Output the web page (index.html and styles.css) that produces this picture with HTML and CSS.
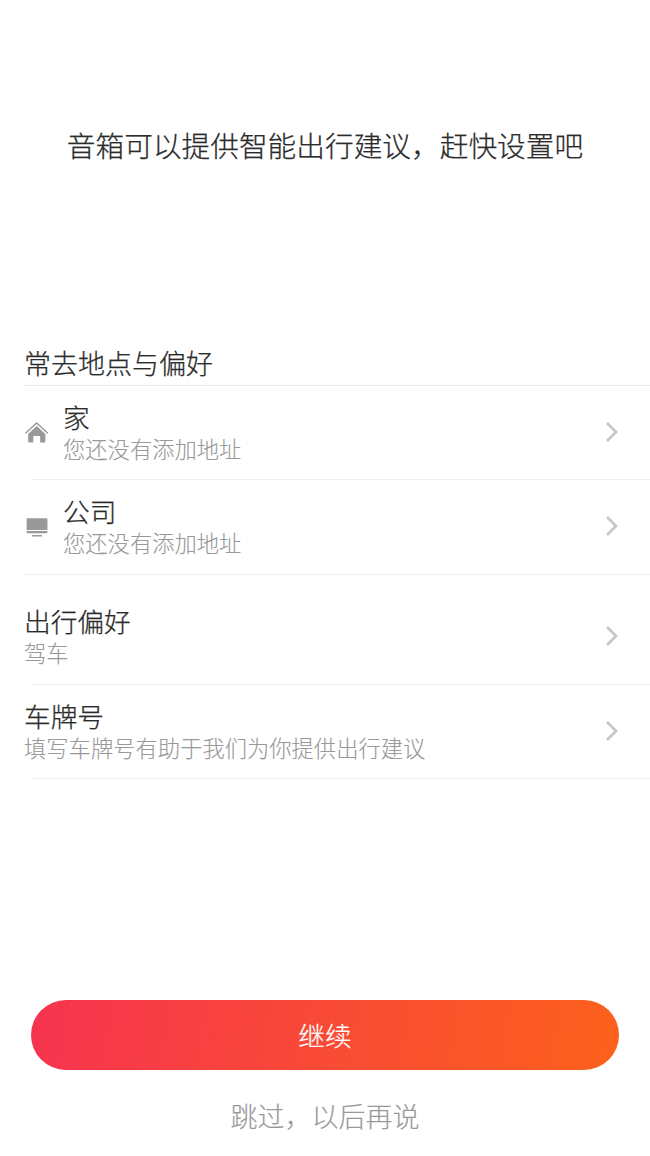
FILE: index.html
```html
<!DOCTYPE html>
<html lang="zh-CN">
<head>
<meta charset="utf-8">
<title>出行设置</title>
<link rel="stylesheet" href="styles.css">
</head>
<body>
<main class="page">
  <h1 class="headline">音箱可以提供智能出行建议，赶快设置吧</h1>
  <section class="settings">
    <h2 class="section-title">常去地点与偏好</h2>
    <div class="row">
      <svg class="icon" viewBox="0 0 24 24"><path d="M1.500 11.800 12.200 2l10.700 9.800" fill="none" stroke="#999" stroke-width="1.400"/><path d="M4 12.400 12.200 4.800l8.300 7.600v7.200q0 1-1 1h-4v-5.500q0-.7-.7-.7H9.600q-.7 0-.7.700v5.500H5q-1 0-1-1z" fill="#999"/></svg>
      <div class="copy"><div class="name">家</div><div class="detail">您还没有添加地址</div></div>
      <svg class="chevron" viewBox="0 0 14 22"><path d="m2 2 9 9-9 9"/></svg>
    </div>
    <div class="row last">
      <svg class="icon" viewBox="0 0 24 24"><path d="M3.500 3h18q1 0 1 1v10.300h-20V4q0-1 1-1zM2.500 15.400h20v1q0 1.200-1.200 1.200H3.700q-1.200 0-1.200-1.200zM7.700 19.300h9.600v1.300H7.700z" fill="#999"/></svg>
      <div class="copy"><div class="name">公司</div><div class="detail">您还没有添加地址</div></div>
      <svg class="chevron" viewBox="0 0 14 22"><path d="m2 2 9 9-9 9"/></svg>
    </div>
    <div class="row spaced">
      <div class="copy"><div class="name">出行偏好</div><div class="detail">驾车</div></div>
      <svg class="chevron" viewBox="0 0 14 22"><path d="m2 2 9 9-9 9"/></svg>
    </div>
    <div class="row">
      <div class="copy"><div class="name">车牌号</div><div class="detail">填写车牌号有助于我们为你提供出行建议</div></div>
      <svg class="chevron" viewBox="0 0 14 22"><path d="m2 2 9 9-9 9"/></svg>
    </div>
  </section>
  <footer class="actions">
    <button class="primary">继续</button>
    <button class="skip">跳过，以后再说</button>
  </footer>
</main>
</body>
</html>
```
FILE: styles.css
```css
* { box-sizing: border-box; }
body { margin: 0; background: #fff; color: #2b2b2b; font-family: "Liberation Sans", "Noto Sans CJK SC", sans-serif; font-weight: 300; -webkit-text-stroke: 0.25px currentColor; }
.page { height: 1156px; display: flex; flex-direction: column; }
.headline { margin: 127px 0 0; height: 40px; font-size: 28.700px; line-height: 40px; font-weight: 300; text-align: center; white-space: nowrap; }
.settings { margin-top: 173px; }
.section-title { margin: 0 0 0 24px; height: 46px; padding-top: 5px; border-bottom: 1px solid #ebebeb; font-size: 27px; line-height: 40px; font-weight: 300; }
.row { height: 94px; padding: 0 31px 2px 24px; display: flex; align-items: center; background: linear-gradient(#efefef, #efefef) 32px 100% / 100% 1px no-repeat; }
.row.last { height: 95px; padding-bottom: 3px; background-position: 24px 100%; }
.row.spaced { height: 110px; padding-top: 14px; }
.icon { width: 25px; height: 25px; margin: 3px 14px 0 0; flex: none; }
.copy { flex: 1; padding-top: 3px; }
.name { font-size: 26.700px; line-height: 34px; }
.detail { font-size: 22.300px; line-height: 29px; color: #999; -webkit-text-stroke-width: 0.1px; }
.chevron { width: 14px; height: 22px; flex: none; fill: none; stroke: #c7c7c7; stroke-width: 2.800; }
.actions { margin: auto 31px 20px; display: flex; flex-direction: column; align-items: stretch; }
button { border: 0; padding: 0; font-family: inherit; font-weight: 300; }
.primary { height: 70px; padding-bottom: 1px; border-radius: 35px; background: linear-gradient(100deg, #f63350, #fc611b); color: #fff; font-size: 26.700px; -webkit-text-stroke-width: 0.2px; }
.skip { height: 40px; margin-top: 26px; padding-top: 4px; background: none; color: #999; font-size: 27px; line-height: 36px; -webkit-text-stroke-width: 0.15px; }
```
